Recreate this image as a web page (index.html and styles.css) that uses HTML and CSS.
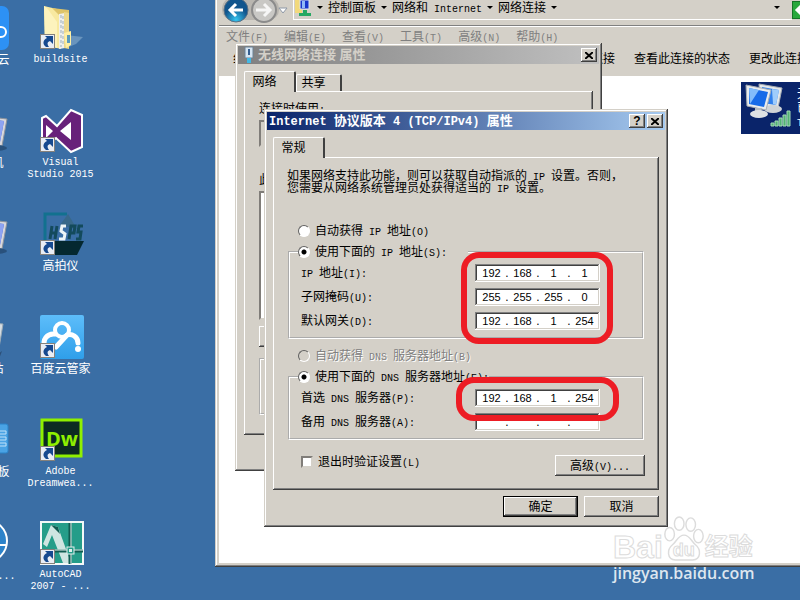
FILE: index.html
```html
<!DOCTYPE html>
<html lang="zh-CN">
  <head>
    <meta charset="UTF-8" />
    <meta name="viewport" content="width=device-width, initial-scale=1.0" />
    <title>Internet 协议版本 4 (TCP/IPv4) 属性</title>
    <link rel="stylesheet" href="styles.css">
  </head>
  <body>
    <svg class="defs" width="0" height="0">
      <symbol id="arrow" viewBox="0 0 15 15">
        <path d="M0 0h15v15H0z" fill="#85817b" />
        <path d="M1 1h13v13H1z" fill="#e9edf4" />
        <path d="M5 2h8v8l-3-3c-3 1-3 3-1 6H6C2 10 3 6 7 4z" fill="#16498f" />
      </symbol>
      <symbol id="monitor" viewBox="0 0 48 48">
        <path d="M12 8l33 4-5 27-30-5z" fill="#d8d8dc" stroke="#8e949c" />
        <path d="M15 11l27 3-4 21-25-4z" fill="#3f62dc" />
        <path d="M30 13l12 1-4 21-4-1z" fill="#8ea4f2" />
        <ellipse cx="34" cy="41" rx="11" ry="3" fill="#29517c" />
      </symbol>
    </svg>

    <main class="desktop">
      <section class="icons">
        <a class="icon" href="#">
          <svg viewBox="0 0 48 48">
            <rect x="2" y="2" width="45" height="44" rx="7" fill="#2d91f5" />
            <circle cx="39" cy="28" r="5" fill="none" stroke="#fff" stroke-width="2" />
          </svg>
          <span>腾讯微云</span>
        </a>
        <a class="icon" href="#">
          <span class="pic">
            <svg viewBox="0 0 48 48">
              <path d="M29 31l17 2-7 7-10 4z" fill="#6994bd" />
              <path d="M7 2l17 4v39L8 41z" fill="#f8e9a0" />
              <path d="M7 2l3 2 10 14v26L8 41z" fill="#fdf3bd" />
              <path d="M15 4l17 2v38l-10-1V11z" fill="#dec469" />
              <path d="M22 10l6-1v35l-6 1z" fill="#f0f0ec" />
              <path d="M24 11v32M26 12v30" stroke="#9db0bd" stroke-dasharray="3 2" />
              <path d="M27 8l5 1v36l-5-1z" fill="#edd98b" />
              <path d="M27 29l7-2v14l-5 3z" fill="#fff0a4" />
              <path d="M30 31h3v8h-3z" fill="#5c9bbb" />
            </svg>
            <svg class="arrow"><use href="#arrow" /></svg>
          </span>
          <span class="en">buildsite</span>
        </a>
        <a class="icon" href="#">
          <svg><use href="#monitor" /></svg>
          <span>计算机</span>
        </a>
        <a class="icon" href="#">
          <span class="pic">
            <svg viewBox="0 0 48 48">
              <path d="M5 11l4-2 11 10L34 3l11 5v32l-11 5-15-14-10 9-4-3z" fill="#68217a" stroke="#fff" stroke-width="2" />
              <path d="M9 18v13l7-7zM34 15l-11 9 11 9z" fill="#fff" />
            </svg>
            <svg class="arrow"><use href="#arrow" /></svg>
          </span>
          <span class="en">Visual<br />Studio 2015</span>
        </a>
        <a class="icon" href="#">
          <svg><use href="#monitor" /></svg>
          <span>网络</span>
        </a>
        <a class="icon" href="#">
          <span class="pic">
            <svg viewBox="0 0 48 48">
              <path d="M8 33V4h22" fill="none" stroke="#12718f" stroke-width="3" />
              <path d="M23 15l8-11 9 15z" fill="#38688a" />
              <path d="M16 31h31l-7 14H16z" fill="#042830" />
              <path d="M13 29l2-13M18 29l2-13M14 23h5M32 29l2-13h4l-1 7h-4M46 16h-4l-1 6h3l-1 7h-4" fill="none" stroke="#134a5c" stroke-width="3" />
              <path d="M29 16h-4l-1 5 4 3-1 5h-5" fill="none" stroke="#eef5f7" stroke-width="3" />
            </svg>
            <svg class="arrow"><use href="#arrow" /></svg>
          </span>
          <span>高拍仪</span>
        </a>
        <a class="icon" href="#">
          <svg viewBox="0 0 48 48">
            <path d="M10 8l31 3-5 30-20 2z" fill="#d6dde2" stroke="#9aa9b4" />
            <path d="M32 44l8-6-3 8z" fill="#2d5078" />
          </svg>
          <span>回收站</span>
        </a>
        <a class="icon" href="#">
          <span class="pic">
            <svg viewBox="0 0 48 48">
              <linearGradient id="pan" x2="0" y2="1">
                <stop stop-color="#5dbdfa" />
                <stop offset="1" stop-color="#2f9fea" />
              </linearGradient>
              <rect x="3" y="2" width="44" height="44" rx="2" fill="url(#pan)" />
              <circle cx="25" cy="17" r="7" fill="none" stroke="#fff" stroke-width="4" />
              <path d="M18 21c-8-1-13 6-10 13M19 34l11-12c5-2 11 2 11 8" fill="none" stroke="#fff" stroke-width="5" stroke-linecap="round" />
              <circle cx="41" cy="36" r="3" fill="#fff" />
            </svg>
            <svg class="arrow"><use href="#arrow" /></svg>
          </span>
          <span>百度云管家</span>
        </a>
        <a class="icon" href="#">
          <svg viewBox="0 0 48 48">
            <rect x="6" y="8" width="40" height="29" rx="2" fill="#4aa3e4" stroke="#2a83c8" />
            <path d="M36 15h8v3h-8zM36 21h8v3h-8zM36 27h8v3h-8z" fill="none" stroke="#bfe1f8" />
          </svg>
          <span>控制面板</span>
        </a>
        <a class="icon" href="#">
          <span class="pic">
            <svg viewBox="0 0 48 48">
              <rect x="5" y="4" width="39" height="36" fill="#0d2b22" stroke="#8ff000" stroke-width="3" />
              <text class="dw" x="9" y="30">Dw</text>
            </svg>
            <svg class="arrow"><use href="#arrow" /></svg>
          </span>
          <span class="en">Adobe<br />Dreamwea...</span>
        </a>
        <a class="icon" href="#">
          <svg viewBox="0 0 48 48">
            <circle cx="24" cy="22" r="21" fill="#2d83ca" stroke="#fff" stroke-width="2" />
            <path d="M3 26h42M34 26v16" stroke="#fff" stroke-width="2" />
          </svg>
          <span><span class="en">360</span>安全<span class="en">...</span></span>
        </a>
        <a class="icon" href="#">
          <span class="pic">
            <svg viewBox="0 0 48 48">
              <rect x="4" y="3" width="42" height="42" fill="#259d89" stroke="#f4f8f8" stroke-width="2" />
              <path d="M6 25L14 6l7 2 13 36h-8L15 16 10 28z" fill="#cfe5e1" />
              <path d="M14 6l7 2 2 7-5-5z" fill="#115c51" />
              <path d="M33 4v41M5 32h41" stroke="#115c51" stroke-width="3" />
              <path d="M34 4v41M5 31h41" stroke="#e3f0ee" />
              <rect x="30" y="28" width="7" height="7" fill="#259d89" stroke="#e3f0ee" />
              <rect x="32" y="30" width="3" height="3" fill="#dff0ed" />
            </svg>
            <svg class="arrow"><use href="#arrow" /></svg>
          </span>
          <span class="en">AutoCAD<br />2007 - ...</span>
        </a>
      </section>

      <!-- network connections folder -->
      <section class="window explorer">
        <div class="toolbar">
          <svg class="nav-buttons" viewBox="0 0 74 26">
            <radialGradient id="back" cy=".9">
              <stop stop-color="#37c5ef" />
              <stop offset="1" stop-color="#11558d" />
            </radialGradient>
            <rect x="3" y="1" width="57" height="22" rx="10" fill="#b9b6b0" />
            <circle cx="17" cy="13" r="12" fill="url(#back)" stroke="#5b7185" />
            <path d="M24 13H12m5-6l-6 6 6 6" fill="none" stroke="#fff" stroke-width="3" />
            <circle cx="45" cy="13" r="12" fill="#c9c8c5" stroke="#8b8b8b" stroke-width="2" />
            <path d="M37 13h13m-5-6l6 6-6 6" fill="none" stroke="#f6f6f6" stroke-width="3" />
            <path d="M60 11h8l-4 5z" fill="#fff" stroke="#8e98a6" />
          </svg>
          <div class="address">
            <svg class="folder" viewBox="0 0 18 18">
              <path d="M1 0h7v14H1z" fill="#f2d97b" />
              <path d="M6 1h9v9H6z" fill="#1735cb" stroke="#dde3e9" />
              <path d="M8 2h3v7H8z" fill="#91b9f8" />
              <path d="M9 11h4v3h4v3H5v-3h4z" fill="#25a862" />
            </svg>
            <i class="caret"></i>
            <a href="#">控制面板</a>
            <i class="caret"></i>
            <a href="#">网络和<span class="en"> Internet</span></a>
            <i class="caret"></i>
            <a href="#">网络连接</a>
            <i class="caret"></i>
            <i class="caret last"></i>
          </div>
          <svg class="go" viewBox="0 0 16 18">
            <rect x=".5" y=".5" width="15" height="17" fill="#29a83c" stroke="#167427" />
            <path d="M11 3L5 9l6 6M5 9h10" fill="none" stroke="#fff" stroke-width="3" />
          </svg>
        </div>
        <nav class="menu">
          <button>文件<span class="en">(F)</span></button>
          <button>编辑<span class="en">(E)</span></button>
          <button>查看<span class="en">(V)</span></button>
          <button>工具<span class="en">(T)</span></button>
          <button>高级<span class="en">(N)</span></button>
          <button>帮助<span class="en">(H)</span></button>
        </nav>
        <nav class="commands">
          <button class="organize">组织</button>
          <button>禁用此网络设备</button>
          <button>诊断这个连接</button>
          <button>重命名此连接</button>
          <button>查看此连接的状态</button>
          <button>更改此连接的设置</button>
        </nav>
        <div class="files">
          <div class="connection">
            <svg viewBox="0 0 52 52">
              <path d="M18 2l23 4-4 20-18-2z" fill="#e5e8ea" stroke="#a7adb3" />
              <path d="M21 5l17 3-3 15-14-2z" fill="#3180ed" />
              <path d="M31 7l7 1-3 15-3-1z" fill="#9fccfb" />
              <ellipse cx="32" cy="27" rx="9" ry="4" fill="#cfd3d6" />
              <path d="M5 3l25 5-5 20-19-4z" fill="#e9ecee" stroke="#a7adb3" />
              <path d="M8 6l19 4-4 15-15-3z" fill="#176be8" />
              <path d="M8 6l10 2L9 22z" fill="#82bcfb" />
              <path d="M14 26h7l-1 5h-6z" fill="#b6bbc0" />
              <ellipse cx="18" cy="32" rx="9" ry="4" fill="#dfe2e4" />
              <path d="M30 41h3v3h-3zM34 39h3v5h-3zM38 36h3v8h-3zM42 33h3v11h-3zM46 29h3v15h-3z" fill="#52b274" stroke="#a5dbb6" />
            </svg>
            <p>无线网络连接<br />已启用<br /><span class="en">TP-LINK</span></p>
          </div>
        </div>
      </section>

      <!-- adapter properties -->
      <section class="window adapter">
        <header class="title inactive">
          <svg class="plug" viewBox="0 0 12 18">
            <path d="M2 1h8v11H2z" fill="#d6e5f2" stroke="#6d8294" />
            <path d="M5 3h2v6H5z" fill="#355f91" />
            <path d="M4 12h4v5H4z" fill="#42b9e6" />
          </svg>
          <h2>无线网络连接 属性</h2>
          <button class="box" aria-label="关闭"><svg viewBox="0 0 8 7"><path d="M0 0l8 7M8 0L0 7" /></svg></button>
        </header>
        <div class="body">
          <div class="tabs">
            <button class="tab selected">网络</button>
            <button class="tab">共享</button>
          </div>
          <div class="panel">
            <p>连接时使用<span class="en">:</span></p>
            <div class="device"></div>
            <p>此连接使用下列项目<span class="en">(O):</span></p>
            <div class="list"></div>
            <button class="push">安装</button>
            <div class="note"></div>
          </div>
        </div>
      </section>

      <!-- tcp/ip properties -->
      <form class="window tcpip">
        <header class="title">
          <h2><span class="en">Internet </span>协议版本<span class="en"> 4 (TCP/IPv4) </span>属性</h2>
          <button type="button" class="box" aria-label="帮助">?</button>
          <button type="button" class="box" aria-label="关闭"><svg viewBox="0 0 8 7"><path d="M0 0l8 7M8 0L0 7" /></svg></button>
        </header>
        <div class="body">
          <div class="tabs">
            <button type="button" class="tab selected">常规</button>
          </div>
          <div class="panel">
            <p class="intro">如果网络支持此功能，则可以获取自动指派的<span class="en"> IP </span>设置。否则，<br />您需要从网络系统管理员处获得适当的<span class="en"> IP </span>设置。</p>
            <label class="option"><input type="radio" name="ip" /><span>自动获得<span class="en"> IP </span>地址<span class="en">(O)</span></span></label>
            <fieldset>
              <legend><label class="option"><input type="radio" name="ip" checked /><span>使用下面的<span class="en"> IP </span>地址<span class="en">(S):</span></span></label></legend>
              <div class="row">
                <label for="ip1"><span class="en">IP </span>地址<span class="en">(I):</span></label>
                <div class="ip"><input id="ip1" value="192" /><b>.</b><input aria-label="IP 2" value="168" /><b>.</b><input aria-label="IP 3" value="1" /><b>.</b><input aria-label="IP 4" value="1" /></div>
              </div>
              <div class="row">
                <label for="mask1">子网掩码<span class="en">(U):</span></label>
                <div class="ip"><input id="mask1" value="255" /><b>.</b><input aria-label="子网掩码 2" value="255" /><b>.</b><input aria-label="子网掩码 3" value="255" /><b>.</b><input aria-label="子网掩码 4" value="0" /></div>
              </div>
              <div class="row">
                <label for="gate1">默认网关<span class="en">(D):</span></label>
                <div class="ip"><input id="gate1" value="192" /><b>.</b><input aria-label="默认网关 2" value="168" /><b>.</b><input aria-label="默认网关 3" value="1" /><b>.</b><input aria-label="默认网关 4" value="254" /></div>
              </div>
              <div class="mark"></div>
            </fieldset>
            <label class="option off"><input type="radio" name="dns" disabled /><span>自动获得<span class="en"> DNS </span>服务器地址<span class="en">(B)</span></span></label>
            <fieldset>
              <legend><label class="option"><input type="radio" name="dns" checked /><span>使用下面的<span class="en"> DNS </span>服务器地址<span class="en">(E):</span></span></label></legend>
              <div class="row">
                <label for="dns1">首选<span class="en"> DNS </span>服务器<span class="en">(P):</span></label>
                <div class="ip"><input id="dns1" value="192" /><b>.</b><input aria-label="首选 DNS 2" value="168" /><b>.</b><input aria-label="首选 DNS 3" value="1" /><b>.</b><input aria-label="首选 DNS 4" value="254" /></div>
              </div>
              <div class="row">
                <label for="alt1">备用<span class="en"> DNS </span>服务器<span class="en">(A):</span></label>
                <div class="ip"><input id="alt1" /><b>.</b><input aria-label="备用 DNS 2" /><b>.</b><input aria-label="备用 DNS 3" /><b>.</b><input aria-label="备用 DNS 4" /></div>
              </div>
              <div class="mark dns"></div>
            </fieldset>
            <div class="actions">
              <label class="option"><input type="checkbox" /><span>退出时验证设置<span class="en">(L)</span></span></label>
              <button type="button" class="push advanced">高级<span class="en">(V)...</span></button>
            </div>
          </div>
          <footer>
            <button type="button" class="push default">确定</button>
            <button type="button" class="push">取消</button>
          </footer>
        </div>
      </form>

      <div class="watermark">
        <div class="logo">
          <span>Bai</span>
          <span class="paw">
            <svg viewBox="0 0 42 48">
              <g fill="#fff" stroke="#dcdcdc" stroke-width="1.500">
                <ellipse cx="6" cy="20" rx="5" ry="7" />
                <ellipse cx="16" cy="9" rx="5" ry="7" />
                <ellipse cx="28" cy="10" rx="5" ry="7" />
                <ellipse cx="36" cy="22" rx="5" ry="7" />
                <path d="M21 21c-6 0-8 7-12 10-6 5-6 15 3 16 5 0 13 0 18 0 9-1 9-11 3-16-4-3-6-10-12-10z" />
              </g>
            </svg>
            <span class="du">du</span>
          </span>
          <span class="jy">经验</span>
        </div>
        <div class="site">jingyan.baidu.com</div>
      </div>
    </main>
  </body>
</html>
```

FILE: styles.css
```css
* {
  box-sizing: border-box;
}
body {
  margin: 0;
  font-family: "Liberation Sans", "Noto Sans CJK SC", sans-serif;
  font-size: 12px;
  line-height: 14px;
  color: #000;
}
p,
h2 {
  margin: 0;
}
a {
  color: inherit;
  text-decoration: none;
}
button {
  margin: 0;
  padding: 0;
  border: none;
  background: none;
  font: inherit;
  color: inherit;
  white-space: nowrap;
}
.defs {
  position: absolute;
}
.en {
  font-family: "Liberation Mono", monospace;
  font-size: 10px;
  line-height: 8px;
  white-space: pre-wrap;
}

.desktop {
  position: relative;
  height: 100vh;
  overflow: hidden;
  background-color: #3a6ea5;
}

/* desktop icons */
.icons {
  display: grid;
  grid-template-columns: 75px 75px;
  grid-auto-rows: 103px;
  margin-left: -52px;
  padding-top: 4px;
}
.icon {
  display: flex;
  flex-direction: column;
  align-items: center;
  gap: 2px;
  line-height: 12px;
  text-align: center;
  color: #fff;
}
.icon > .en {
  line-height: 12px;
}
.icon svg {
  display: block;
  width: 48px;
  height: 48px;
}
.pic {
  position: relative;
}
.icon .arrow {
  position: absolute;
  left: 3px;
  bottom: 3px;
  width: 15px;
  height: 15px;
}
.dw {
  font-family: "Open Sans", sans-serif;
  font-size: 20px;
  font-weight: 700;
  fill: #8ff000;
}

/* windows */
.window {
  position: absolute;
  display: flex;
  flex-direction: column;
  padding: 3px;
  background-color: #d4d0c8;
  box-shadow: inset -1px -1px #404040, inset 1px 1px #d4d0c8,
    inset -2px -2px #808080, inset 2px 2px #fff;
}
.explorer {
  top: -16px;
  left: 215px;
  right: -60px;
  bottom: 33px;
  padding: 4px;
}
.adapter {
  top: 43px;
  left: 235px;
  width: 367px;
}
.tcpip {
  top: 109px;
  left: 264px;
  width: 404px;
}

/* explorer bars */
.toolbar {
  display: flex;
  align-items: flex-end;
  height: 38px;
  border-bottom: 1px solid #808080;
}
.nav-buttons {
  width: 74px;
  height: 26px;
  margin-bottom: 2px;
}
.address {
  display: flex;
  flex: 1;
  align-items: center;
  gap: 8px;
  height: 24px;
  margin-bottom: 5px;
  border-bottom: 1px solid #fff;
  border-left: 1px solid #fff;
}
.folder {
  width: 18px;
  height: 18px;
}
.caret {
  border: 3px solid transparent;
  border-top-color: #000;
  border-bottom: none;
  width: 6px;
  margin: 0 -3px;
}
.caret.last {
  margin: 0 12px 0 auto;
}
.go {
  width: 16px;
  height: 18px;
  margin: 0 48px 6px 0;
}
.menu {
  display: flex;
  gap: 16px;
  padding: 3px 7px;
  border-top: 1px solid #fff;
  color: #808080;
}
.commands {
  display: flex;
  gap: 19px;
  height: 29px;
  padding: 0 14px 5px;
}
.organize {
  min-width: 97px;
  text-align: left;
}
.files {
  flex: 1;
  padding: 6px 4px;
  background-color: #fff;
}
.connection {
  display: flex;
  width: 115px;
  height: 52px;
  margin-left: auto;
  margin-right: -4px;
  overflow: hidden;
  background-color: #0a246a;
  color: #fff;
  white-space: nowrap;
}
.connection svg {
  flex: none;
  width: 52px;
  height: 52px;
}
.connection p {
  padding: 5px 4px;
}

/* dialogs */
.title {
  display: flex;
  align-items: center;
  height: 18px;
  padding: 0 2px;
  background: linear-gradient(to right, #0a246a, #a6caf0);
  color: #fff;
}
.title.inactive {
  background: linear-gradient(to right, #808080, #c0c0c0);
  color: #d4d0c8;
}
.title h2 {
  flex: 1;
  font-size: 13px;
  font-weight: 700;
  line-height: 18px;
}
.title .en {
  font-size: 12px;
}
.plug {
  width: 12px;
  height: 18px;
  margin: 0 3px;
}
.box {
  display: flex;
  align-items: center;
  justify-content: center;
  width: 16px;
  height: 14px;
  margin-left: 2px;
  background-color: #d4d0c8;
  box-shadow: inset -1px -1px #404040, inset 1px 1px #fff,
    inset -2px -2px #808080;
  color: #000;
  font-weight: 700;
}
.box svg {
  width: 8px;
  height: 7px;
  fill: none;
  stroke: #000;
  stroke-width: 2;
}
.body {
  padding: 7px 6px;
}
.tabs {
  display: flex;
  align-items: flex-end;
  height: 20px;
}
.tab {
  width: 46px;
  height: 17px;
  padding-right: 10px;
  border-top: 1px solid #fff;
  border-left: 1px solid #fff;
  border-right: 2px solid #404040;
  border-radius: 2px 2px 0 0;
}
.tab.selected {
  position: relative;
  width: 52px;
  height: 21px;
  margin-bottom: -1px;
  background-color: #d4d0c8;
}
.panel {
  padding: 13px 14px 14px;
  box-shadow: inset -1px -1px #404040, inset 1px 1px #fff,
    inset -2px -2px #808080;
}
.push {
  width: 75px;
  height: 21px;
  box-shadow: inset -1px -1px #404040, inset 1px 1px #fff,
    inset -2px -2px #808080;
}
.push.default {
  border: 1px solid #000;
}
.push.advanced {
  width: 90px;
}

.adapter .body {
  padding-bottom: 33px;
}
.adapter .panel {
  padding: 11px 15px 20px;
}
.adapter .push {
  display: block;
}
.device,
.list {
  margin-top: 4px;
  height: 27px;
  border: 2px inset #d4d0c8;
}
.device {
  margin-bottom: 26px;
}
.list {
  height: 129px;
  margin-bottom: 6px;
  background-color: #fff;
}
.adapter .note {
  height: 57px;
  margin-top: 11px;
  border: 2px groove #fff;
}

/* tcp/ip form */
.intro {
  margin-bottom: 30px;
  line-height: 12px;
}
.option {
  display: flex;
  align-items: center;
  gap: 5px;
  height: 14px;
}
.panel > .option {
  margin: 0 11px 7px;
}
.option input {
  appearance: none;
  width: 12px;
  height: 12px;
  margin: 0;
  border: 2px inset #d4d0c8;
  background-color: #fff;
}
.option input[type="radio"] {
  border: 1px solid #fff;
  border-top-color: #606060;
  border-left-color: #606060;
  border-radius: 50%;
}
.option input[type="radio"]:checked {
  background-image: radial-gradient(circle, #000 2px, transparent 3px);
}
.option input:disabled {
  background-color: #d4d0c8;
}
.off {
  color: #808080;
  text-shadow: 1px 1px #fff;
}
fieldset {
  position: relative;
  min-width: 0;
  margin: 0 1px 10px;
  padding: 5px 0 7px;
  border: 2px groove #fff;
}
legend {
  min-width: 170px;
  margin-left: 8px;
  padding: 0;
}
.row {
  display: flex;
  align-items: center;
  justify-content: space-between;
  padding: 0 42px 0 11px;
}
.row + .row {
  margin-top: 6px;
}
.ip {
  display: flex;
  align-items: center;
  width: 125px;
  height: 18px;
  padding-left: 4px;
  background-color: #fff;
  box-shadow: inset -1px -1px #fff, inset 1px 1px #808080,
    inset -2px -2px #d4d0c8, inset 2px 2px #404040;
}
.ip input {
  width: 25px;
  height: 14px;
  padding: 0;
  border: none;
  background: none;
  font-family: "Liberation Sans", sans-serif;
  font-size: 11px;
  text-align: center;
}
.ip b {
  width: 6px;
  font-weight: 400;
  text-align: center;
}
.mark {
  position: absolute;
  top: -7px;
  right: 29px;
  width: 152px;
  height: 92px;
  border: 6px solid #ed1c24;
  border-radius: 18px;
}
.mark.dns {
  right: 23px;
  width: 163px;
  height: 44px;
}
.actions {
  display: flex;
  align-items: flex-start;
  justify-content: space-between;
  margin-top: 15px;
  padding-left: 14px;
}
.tcpip footer {
  display: flex;
  justify-content: flex-end;
  gap: 6px;
  padding-top: 6px;
}

/* watermark */
.watermark {
  position: absolute;
  right: 44px;
  bottom: 15px;
  width: 143px;
  color: #fff;
}
.logo {
  display: flex;
  align-items: flex-end;
  font-size: 32px;
  font-weight: 700;
  line-height: 28px;
  -webkit-text-stroke: 1px #dcdcdc;
}
.jy {
  font-size: 24px;
}
.paw {
  position: relative;
}
.paw svg {
  display: block;
  width: 42px;
  height: 46px;
}
.du {
  position: absolute;
  left: 10px;
  bottom: 0;
  font-size: 18px;
  line-height: 22px;
}
.site {
  font-family: "Open Sans", sans-serif;
  font-size: 16px;
  font-weight: 600;
  line-height: 24px;
  color: #dde6ef;
}
```
